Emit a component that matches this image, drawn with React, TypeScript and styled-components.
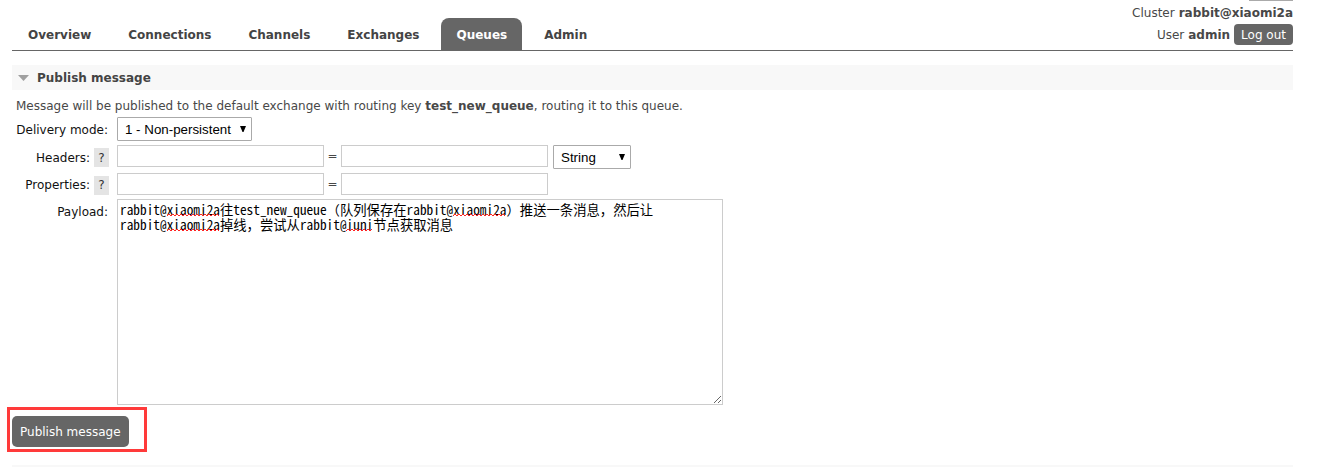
import React from "react";
import styled, { createGlobalStyle } from "styled-components";

const GlobalStyle = createGlobalStyle`
  * { box-sizing: border-box; }
  html { overflow: hidden; }
  body {
    margin: 0;
    background: #fff;
    color: #484848;
    font: 12px/16px "DejaVu Sans", Verdana, sans-serif;
  }
`;

const Page = styled.div`
  padding: 0 29px 0 12px;
`;

const Header = styled.header`
  display: flex;
  align-items: flex-end;
  justify-content: space-between;
  border-bottom: 1px solid #666;
`;

const Tabs = styled.nav`
  display: flex;
  gap: 7px;
  padding-left: 1px;
`;

const Tab = styled.a<{ $active?: boolean }>`
  padding: 9px 15px 7px;
  border-radius: 8px 8px 0 0;
  font-weight: bold;
  text-decoration: none;
  color: ${(p) => (p.$active ? "#fff" : "#444")};
  background: ${(p) => (p.$active ? "#666" : "transparent")};
`;

const Status = styled.div`
  display: flex;
  flex-direction: column;
  align-items: flex-end;
  padding-bottom: 5px;
`;

const RefreshEdge = styled.div`
  width: 44px;
  height: 1px;
  margin-bottom: 4px;
  background: #aaa;
`;

const StatusLine = styled.div`
  display: flex;
  align-items: center;
  gap: 4px;
  margin-bottom: 3px;

  &:last-child { margin-bottom: 0; }
`;

const Button = styled.button<{ $small?: boolean }>`
  padding: ${(p) => (p.$small ? "0 7px" : "0 8px")};
  height: ${(p) => (p.$small ? "21px" : "31px")};
  border: 0;
  border-radius: ${(p) => (p.$small ? "4px" : "5px")};
  background: #666;
  color: #fff;
  font: inherit;
  white-space: nowrap;
`;

const SectionTitle = styled.h2`
  display: flex;
  align-items: center;
  gap: 8px;
  height: 25px;
  margin: 14px 0 8px;
  padding-left: 6px;
  background: #f8f8f8;
  color: #444;
  font-size: 12px;
`;

const Intro = styled.p`
  margin: 0 0 3px;
  padding-left: 4px;
`;

const Fields = styled.div`
  display: grid;
  grid-template-columns: 97px 1fr;
  gap: 4px 8px;
`;

const LabelCell = styled.div<{ $short?: boolean }>`
  display: flex;
  align-items: center;
  justify-content: flex-end;
  align-self: start;
  gap: 4px;
  height: ${(p) => (p.$short ? "22px" : "24px")};
  padding-top: ${(p) => (p.$short ? "2px" : "1px")};
  color: #111;
`;

const PlainLabel = styled.label`
  padding-right: 1px;
`;

const Help = styled.button`
  width: 15px;
  height: 19px;
  padding: 0;
  border: 0;
  background: #e4e4e4;
  color: #333;
  font: inherit;
`;

const Controls = styled.div`
  display: flex;
  align-items: flex-start;
  gap: 5px;
`;

const Pair = styled.div`
  display: grid;
  grid-template-columns: 207px 17px 207px;
  justify-items: center;
  align-items: center;
`;

const TextInput = styled.input`
  width: 100%;
  height: 22px;
  padding: 3px;
  border: 1px solid #ccc;
  background: #fff;
`;

const SelectBox = styled.div<{ $width: number }>`
  position: relative;
  width: ${(p) => p.$width}px;

  svg {
    position: absolute;
    top: 9px;
    right: 6px;
    pointer-events: none;
  }
`;

const Select = styled.select`
  appearance: none;
  display: block;
  width: 100%;
  height: 24px;
  padding: 0 7px;
  border: 1px solid #aaa;
  border-radius: 1px;
  background: #fff;
  color: #000;
  font-family: "Liberation Sans", Arial, sans-serif;
`;

const PayloadBox = styled.div`
  position: relative;
  width: 606px;
  max-width: 100%;
`;

const Payload = styled.textarea`
  display: block;
  width: 100%;
  height: 206px;
  padding: 2px;
  border: 1px solid #ccc;
  line-height: 15px;
  color: #000;
  font-family: "Noto Sans Mono CJK SC", "Noto Sans CJK SC", monospace;
`;

const SpellMarks = styled.svg`
  position: absolute;
  top: 0;
  left: 0;
  pointer-events: none;
`;

const Actions = styled.div`
  position: relative;
  width: max-content;
  margin: 11px 0 18px;
`;

const Highlight = styled.div`
  position: absolute;
  inset: -9px -18px -5px -5px;
  border: 3px solid #ff3a3a;
  pointer-events: none;
`;

const NextSection = styled.div`
  height: 2px;
  background: #f8f8f8;
`;

const tabs = ["Overview", "Connections", "Channels", "Exchanges", "Queues", "Admin"];

const message =
  "rabbit@xiaomi2a往test_new_queue（队列保存在rabbit@xiaomi2a）推送一条消息，然后让rabbit@xiaomi2a掉线，尝试从rabbit@iuni节点获取消息";

const marks = [
  { x: 50, y: 15, w: 53 },
  { x: 336, y: 15, w: 53 },
  { x: 50, y: 30, w: 53 },
  { x: 229, y: 30, w: 27 },
];

function wavePath(x: number, y: number, w: number) {
  let d = `M${x} ${y + 2}`;
  for (let i = 2; i <= w; i += 2) {
    d += `L${x + i} ${i % 4 === 2 ? y : y + 2}`;
  }
  return d;
}

function DropDown({ id, label, width, options }: { id: string; label?: string; width: number; options: string[] }) {
  return (
    <SelectBox $width={width}>
      <Select id={id} aria-label={label}>
        {options.map((o) => (
          <option key={o}>{o}</option>
        ))}
      </Select>
      <svg width="6" height="6" aria-hidden="true">
        <path d="M0 0H6L3.5 6H2.5Z" fill="#000" />
      </svg>
    </SelectBox>
  );
}

function KeyValue({ id, name }: { id: string; name: string }) {
  return (
    <Pair>
      <TextInput id={id} type="text" />
      <span>=</span>
      <TextInput type="text" aria-label={`${name} value`} />
    </Pair>
  );
}

export default function App() {
  return (
    <Page>
      <GlobalStyle />
      <Header>
        <Tabs>
          {tabs.map((t) => (
            <Tab key={t} href="#" $active={t === "Queues"}>
              {t}
            </Tab>
          ))}
        </Tabs>
        <Status>
          <RefreshEdge />
          <StatusLine>
            <span>Cluster</span>
            <b>rabbit@xiaomi2a</b>
          </StatusLine>
          <StatusLine>
            <span>User</span>
            <b>admin</b>
            <Button $small type="button">Log out</Button>
          </StatusLine>
        </Status>
      </Header>

      <main>
        <SectionTitle>
          <svg width="11" height="6" aria-hidden="true">
            <path d="M0 0H11L5.5 6Z" fill="#a0a0a0" />
          </svg>
          Publish message
        </SectionTitle>
        <Intro>
          Message will be published to the default exchange with routing key <b>test_new_queue</b>, routing it to this
          queue.
        </Intro>
        <form>
          <Fields>
            <LabelCell>
              <PlainLabel htmlFor="mode">Delivery mode:</PlainLabel>
            </LabelCell>
            <Controls>
              <DropDown id="mode" width={135} options={["1 - Non-persistent", "2 - Persistent"]} />
            </Controls>

            <LabelCell>
              <label htmlFor="headers">Headers:</label>
              <Help type="button">?</Help>
            </LabelCell>
            <Controls>
              <KeyValue id="headers" name="Header" />
              <DropDown id="type" label="Header type" width={78} options={["String", "Number", "Boolean"]} />
            </Controls>

            <LabelCell $short>
              <label htmlFor="props">Properties:</label>
              <Help type="button">?</Help>
            </LabelCell>
            <Controls>
              <KeyValue id="props" name="Property" />
            </Controls>

            <LabelCell>
              <PlainLabel htmlFor="payload">Payload:</PlainLabel>
            </LabelCell>
            <PayloadBox>
              <Payload id="payload" spellCheck={false} defaultValue={message} />
              <SpellMarks width="400" height="40" aria-hidden="true">
                {marks.map((m) => (
                  <path
                    key={`${m.x}-${m.y}`}
                    d={wavePath(m.x, m.y, m.w)}
                    fill="none"
                    stroke="#f22"
                    strokeWidth="1"
                  />
                ))}
              </SpellMarks>
            </PayloadBox>
          </Fields>
          <Actions>
            <Button type="button">Publish message</Button>
            <Highlight />
          </Actions>
        </form>
        <NextSection />
      </main>
    </Page>
  );
}
